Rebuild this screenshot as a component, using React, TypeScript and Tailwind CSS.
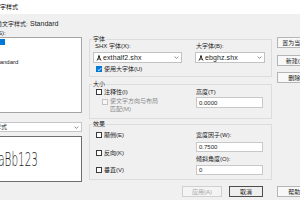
import React from "react";

function Check({ state }: { state: "on" | "off" | "disabled" }) {
  if (state === "on")
    return (
      <span className="w-[6px] h-[6px] shrink-0 bg-[#0078d7] flex items-center justify-center">
        <svg width="5" height="5" viewBox="0 0 5 5">
          <path d="M0.8 2.6 L2 3.7 L4.2 1.2" stroke="#fff" strokeWidth="0.9" fill="none" />
        </svg>
      </span>
    );
  if (state === "disabled")
    return <span className="w-[6px] h-[6px] shrink-0 bg-[#f7f7f7] border border-[#c4c4c4]" />;
  return <span className="w-[6px] h-[6px] shrink-0 bg-white border border-[#3a3a3a]" />;
}

function Chevron() {
  return (
    <svg width="5" height="3" viewBox="0 0 5 3" className="shrink-0">
      <path d="M0.6 0.5 L2.5 2.4 L4.4 0.5" stroke="#606060" strokeWidth="0.7" fill="none" />
    </svg>
  );
}

function ShxIcon() {
  return (
    <svg width="6" height="6" viewBox="0 0 6 6" className="shrink-0">
      <path d="M3 0.4 V1.6 M3 1.6 L0.9 5.6 M3 1.6 L5.1 5.6 M1.7 4.1 H4.3" stroke="#111" strokeWidth="0.8" fill="none" />
      <circle cx="3" cy="1.4" r="0.8" fill="#111" />
    </svg>
  );
}

function Combo({ text, w }: { text: string; w: string }) {
  return (
    <div className={`${w} mt-[3px] h-[11px] border border-[#c2c2c2] bg-white flex items-center pl-[2px] pr-[2px] gap-[1px]`}>
      <ShxIcon />
      <span className="text-[7px] tracking-[0.1px] leading-[7px]">{text}</span>
      <span className="ml-auto flex">
        <Chevron />
      </span>
    </div>
  );
}

export default function App() {
  return (
    <div className="w-[300px] h-[200px] overflow-hidden bg-[#f0f0f0] text-[#1b1b1b] font-['Liberation_Sans','Noto_Sans_CJK_SC',sans-serif] text-[6px] leading-[6px] flex flex-col">
      {/* title bar */}
      <div className="h-[14px] shrink-0 bg-white flex items-center">
        <span className="-ml-[6px] text-black">文字样式</span>
      </div>

      {/* current style */}
      <div className="mt-[6px] h-[7px] shrink-0 flex items-center">
        <span className="-ml-[10px] w-[40px] shrink-0">当前文字样式:</span>
        <span className="text-[7px] leading-[7px]">Standard</span>
      </div>

      <div className="mt-[2px] h-[7px] shrink-0 flex items-center">
        <span className="-ml-[16px]">样式(S):</span>
      </div>

      {/* main */}
      <div className="mt-[1px] h-[163px] shrink-0 flex">
        {/* left column */}
        <div className="w-[82px] shrink-0 flex flex-col">
          <div className="-ml-[2px] w-[84px] h-[76px] border border-[#a5a5a5] bg-white flex flex-col pt-[1px]">
            <div className="h-[6px] w-[6px] bg-[#0078d7]" />
            <div className="mt-[13px] h-[7px] flex items-center -ml-[5px]">Standard</div>
          </div>
          <div className="mt-[9px] -ml-[2px] w-[84px] h-[10px] border border-[#c6c6c6] bg-white flex items-center pr-[2px]">
            <span className="-ml-[16px]">所有样式</span>
            <span className="ml-auto flex">
              <Chevron />
            </span>
          </div>
          <div className="mt-[4px] -ml-[2px] w-[84px] h-[46px] border border-[#6e6e6e] bg-white flex items-center overflow-hidden">
            <span className="-ml-[8px] origin-left scale-x-[0.55] text-[19px] leading-[19px] font-['DejaVu_Sans',sans-serif] font-extralight text-[#222] whitespace-nowrap">
              AaBb123
            </span>
          </div>
        </div>

        {/* middle column */}
        <div className="ml-[7px] w-[183px] shrink-0 flex flex-col">
          {/* font group */}
          <fieldset className="-mt-[1px] border border-[#dcdcdc] pb-[4px]">
            <legend className="ml-[2px] px-[1px] h-[6px] leading-[6px]">字体</legend>
            <div className="grid grid-cols-[89px_70px] gap-x-[13px] ml-[3px]">
              <div className="h-[7px] flex items-center pl-[2px]">SHX 字体(X):</div>
              <div className="h-[7px] flex items-center pl-[1px]">大字体(B):</div>
              <Combo text="exthalf2.shx" w="w-[89px]" />
              <Combo text="ebghz.shx" w="w-[70px]" />
              <div className="col-span-2 mt-[3px] h-[6px] flex items-center gap-[2px] pl-[3px]">
                <Check state="on" />
                <span>使用大字体(U)</span>
              </div>
            </div>
          </fieldset>

          {/* size group */}
          <fieldset className="mt-[4px] border border-[#dcdcdc] pb-[5px]">
            <legend className="ml-[2px] px-[1px] h-[6px] leading-[6px]">大小</legend>
            <div className="grid grid-cols-[89px_70px] gap-x-[13px] ml-[3px]">
              <div className="flex flex-col">
                <div className="mt-[2px] h-[6px] flex items-center gap-[2px] pl-[3px]">
                  <Check state="off" />
                  <span>注释性(I)</span>
                </div>
                <div className="mt-[4px] flex items-start gap-[2px] pl-[9px]">
                  <Check state="disabled" />
                  <div className="-mt-[1px] leading-[7.5px] text-[#8a8a8a]">
                    <div>使文字方向与布局</div>
                    <div>匹配(M)</div>
                  </div>
                </div>
              </div>
              <div className="flex flex-col">
                <div className="mt-[2px] h-[6px] flex items-center pl-[1px]">高度(T)</div>
                <div className="mt-[2px] ml-[1px] w-[67px] h-[11px] border border-[#c8c8c8] bg-white flex items-center pl-[2px]">
                  0.0000
                </div>
              </div>
            </div>
          </fieldset>

          {/* effects group */}
          <fieldset className="mt-[2px] border border-[#dcdcdc] pb-[4px]">
            <legend className="ml-[2px] px-[1px] h-[6px] leading-[6px]">效果</legend>
            <div className="grid grid-cols-[89px_70px] gap-x-[13px] ml-[3px]">
              <div className="flex flex-col">
                <div className="mt-[5px] h-[6px] flex items-center gap-[2px] pl-[3px]">
                  <Check state="off" />
                  <span>颠倒(E)</span>
                </div>
                <div className="mt-[12px] h-[6px] flex items-center gap-[2px] pl-[3px]">
                  <Check state="off" />
                  <span>反向(K)</span>
                </div>
                <div className="mt-[11px] h-[6px] flex items-center gap-[2px] pl-[3px]">
                  <Check state="off" />
                  <span>垂直(V)</span>
                </div>
              </div>
              <div className="flex flex-col">
                <div className="mt-[5px] h-[6px] flex items-center pl-[1px]">宽度因子(W):</div>
                <div className="mt-[4px] ml-[1px] w-[67px] h-[10px] border border-[#c8c8c8] bg-white flex items-center pl-[2px]">
                  0.7500
                </div>
                <div className="mt-[4px] h-[6px] flex items-center pl-[1px]">倾斜角度(O):</div>
                <div className="mt-[3px] ml-[1px] w-[67px] h-[10px] border border-[#c8c8c8] bg-white flex items-center pl-[2px]">
                  0
                </div>
              </div>
            </div>
          </fieldset>

          {/* bottom buttons */}
          <div className="mt-auto mb-[3px] flex justify-end gap-[7px] pr-[9px]">
            <div className="w-[40px] h-[11px] border border-[#d0d0d0] bg-[#f4f4f4] text-[#a6a6a6] flex items-center justify-center">
              应用(A)
            </div>
            <div className="w-[34px] h-[11px] border border-[#4d4d4d] bg-[#eeeeee] flex items-center justify-center">
              取消
            </div>
          </div>
        </div>

        {/* right column */}
        <div className="ml-[5px] w-[43px] shrink-0 flex flex-col">
          <div className="h-[11px] border border-[#b5b5b5] bg-[#f8f8f8] flex items-center justify-center whitespace-nowrap">
            置为当前(C)
          </div>
          <div className="mt-[7px] h-[11px] border border-[#b5b5b5] bg-[#f8f8f8] flex items-center justify-center whitespace-nowrap">
            新建(N)...
          </div>
          <div className="mt-[6px] h-[11px] border border-[#b5b5b5] bg-[#f8f8f8] flex items-center justify-center whitespace-nowrap">
            删除(D)
          </div>
          <div className="mt-auto mb-[3px] h-[11px] border border-[#b5b5b5] bg-[#f8f8f8] flex items-center justify-center whitespace-nowrap">
            帮助(H)
          </div>
        </div>
      </div>
    </div>
  );
}
